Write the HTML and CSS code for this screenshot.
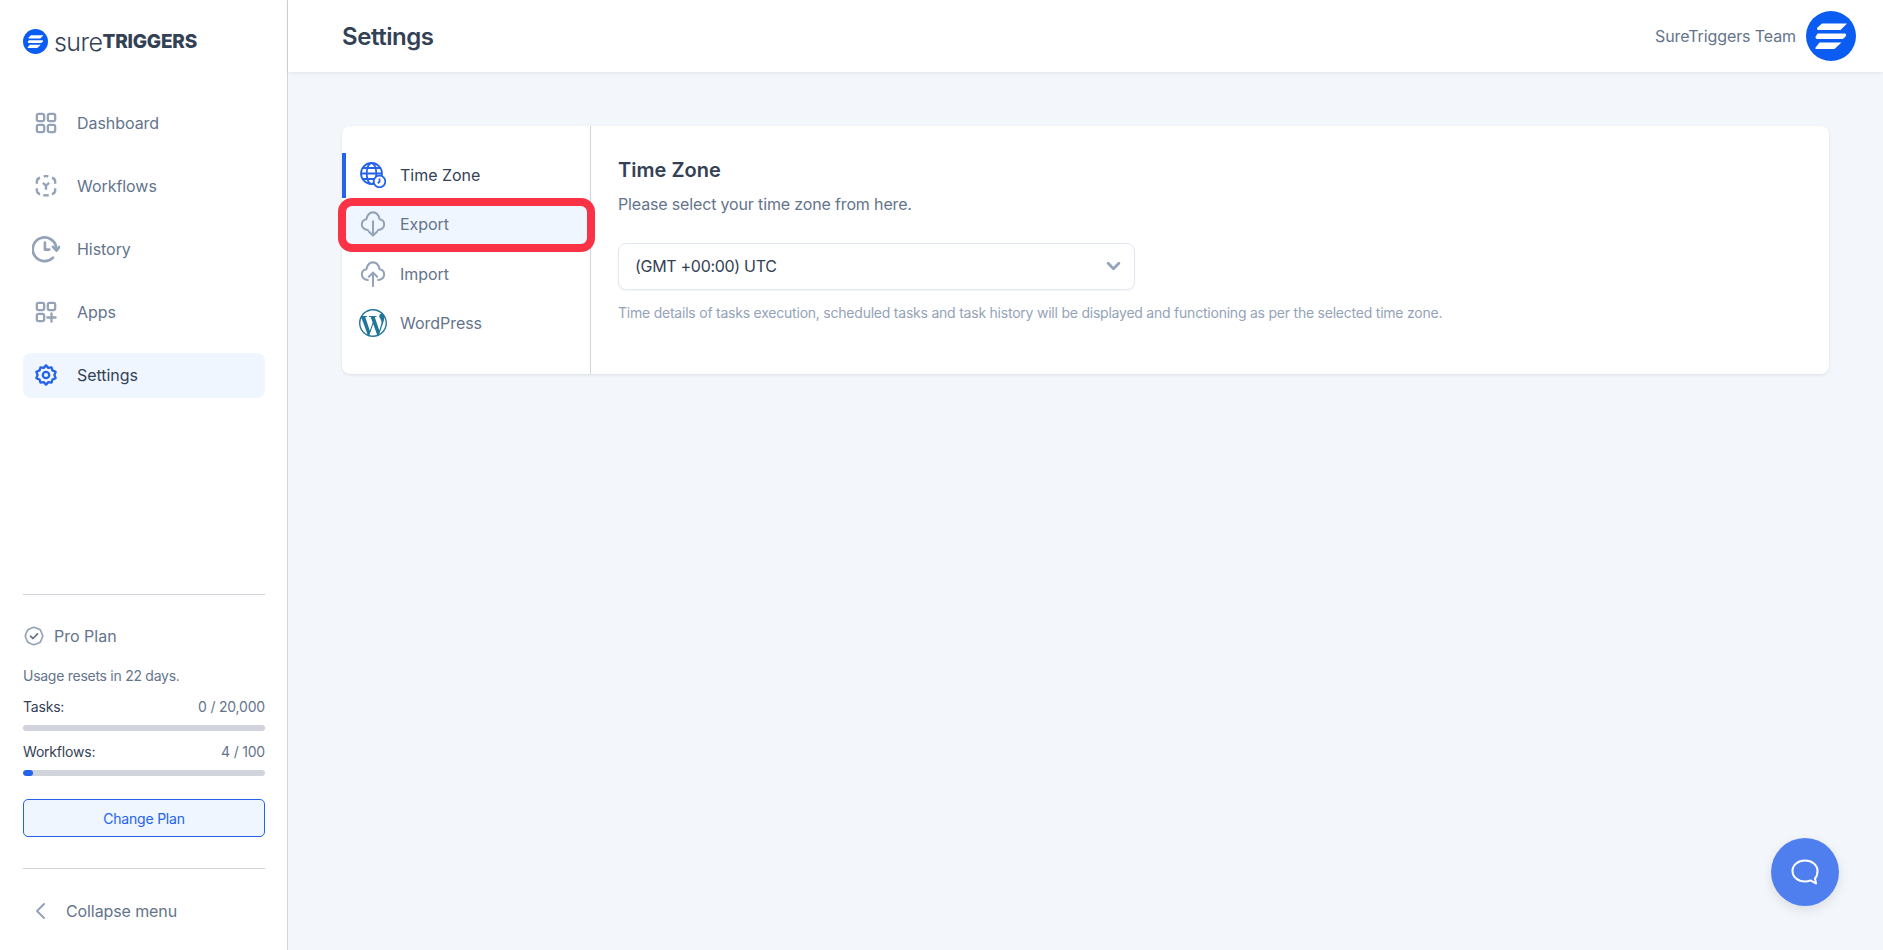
FILE: index.html
```html
<!DOCTYPE html>
<html>

<head>
    <title>Settings</title>
    <meta name="viewport" content="width=device-width, initial-scale=1.0">
    <link rel="stylesheet" href="styles.css">
</head>

<body>
    <svg class="sprite" width="0" height="0">
        <symbol id="brand" viewBox="-25 -25 50 50">
            <circle cx="0" cy="0" r="25" fill="#0b5cf2" />
            <path fill="#fff" d="M-9 -12.500H16L9.500 -6H-12.500C-14 -6 -14.500 -7.500 -13.500 -8.500Z" />
            <path fill="#fff" d="M-13 -2.500H13.500C15.500 -2.500 15.500 -.5 14.500 .5L13 2C12.500 2.500 12 3 11 3H-13.500C-15.500 3 -16 1 -15 0L-14 -1.500C-13.800 -2 -13.500 -2.500 -13 -2.500Z" />
            <path fill="#fff" d="M-11.500 6.500H10.500L3.500 13H-14.500C-16 13 -16 12 -15 11Z" />
        </symbol>
    </svg>

    <div class="app">
        <aside class="sidebar">
            <div class="logo">
                <svg class="logo-mark"><use href="#brand" /></svg>
                <span class="logo-sure">sure</span><span class="logo-triggers">TRIGGERS</span>
            </div>

            <nav class="nav">
                <a class="nav-item">
                    <svg class="nav-icon" viewBox="0 0 24 24" fill="none" stroke="#94a3b8" stroke-width="2.500">
                        <rect x="2" y="2" width="8" height="8" rx="2" />
                        <rect x="14" y="2" width="8" height="8" rx="2" />
                        <rect x="2" y="14" width="8" height="8" rx="2" />
                        <rect x="14" y="14" width="8" height="8" rx="2" />
                    </svg>
                    Dashboard
                </a>
                <a class="nav-item">
                    <svg class="nav-icon" viewBox="0 0 24 24" fill="none" stroke="#94a3b8" stroke-width="2.600" stroke-linejoin="round">
                        <path d="M2 9.500V7C2 5 3 3.800 5.500 3" />
                        <path d="M22 9.500V7C22 5 21 3.800 18.500 3" />
                        <path d="M2 14.500V17C2 19 3 20.200 5.500 21" />
                        <path d="M22 14.500V17C22 19 21 20.200 18.500 21" />
                        <path d="M9.500 1.800L12 .8L14.500 1.800" />
                        <path d="M9 22.200H15" />
                        <path d="M8.500 8.500L12 11.500L15.500 8.500M12 11.500V16" />
                    </svg>
                    Workflows
                </a>
                <a class="nav-item">
                    <svg class="nav-icon nav-icon-wide" viewBox="0 0 26 26" fill="none" stroke="#94a3b8" stroke-width="2.500" stroke-linecap="round" stroke-linejoin="round">
                        <path d="M22.500 11.500A11 11 0 1 0 19.500 21" />
                        <path d="M12 7V13.500H16" />
                        <path d="M19.500 11L22.800 14.500L25.500 11" />
                    </svg>
                    History
                </a>
                <a class="nav-item">
                    <svg class="nav-icon" viewBox="0 0 24 24" fill="none" stroke="#94a3b8" stroke-width="2.500" stroke-linecap="round">
                        <rect x="2" y="2" width="8" height="8" rx="2" />
                        <rect x="14" y="2" width="8" height="8" rx="2" />
                        <rect x="2" y="14" width="8" height="8" rx="2" />
                        <path d="M18 13.500V22.500M13.500 18H22.500" />
                    </svg>
                    Apps
                </a>
                <a class="nav-item nav-item-active">
                    <svg class="nav-icon" viewBox="0 0 24 24" fill="none" stroke="#2563eb" stroke-width="2.500" stroke-linejoin="round">
                        <path d="M12 1.500L14.500 4.200L18 3.600L19 7L22.500 8.500L21.200 12L22.500 15.500L19 17L18 20.400L14.500 19.800L12 22.500L9.500 19.800L6 20.400L5 17L1.500 15.500L2.800 12L1.500 8.500L5 7L6 3.600L9.500 4.200Z" />
                        <circle cx="12" cy="12" r="3.500" />
                    </svg>
                    Settings
                </a>
            </nav>

            <div class="plan">
                <div class="plan-name">
                    <svg class="plan-icon" viewBox="0 0 20 20" fill="none" stroke="#94a3b8" stroke-width="1.700" stroke-linecap="round" stroke-linejoin="round">
                        <path d="M10 1.200L13 2.300L16.200 3.800L17.700 7L18.800 10L17.700 13L16.200 16.200L13 17.700L10 18.800L7 17.700L3.800 16.200L2.300 13L1.200 10L2.300 7L3.800 3.800L7 2.300Z" />
                        <path d="M6.500 10.200L9 12.500L13.500 7.800" stroke="#64748b" />
                    </svg>
                    Pro Plan
                </div>
                <p class="plan-reset">Usage resets in 22 days.</p>
                <div class="usage">
                    <div class="usage-row"><span class="usage-label">Tasks:</span><span>0 / 20,000</span></div>
                    <div class="usage-bar"></div>
                </div>
                <div class="usage">
                    <div class="usage-row"><span class="usage-label">Workflows:</span><span>4 / 100</span></div>
                    <div class="usage-bar"><div class="usage-fill" style="width: 4%"></div></div>
                </div>
                <button class="change-plan">Change Plan</button>
            </div>

            <div class="collapse">
                <svg class="collapse-icon" viewBox="0 0 12 18" fill="none" stroke="#94a3b8" stroke-width="2" stroke-linecap="round" stroke-linejoin="round">
                    <path d="M10 2L3 9L10 16" />
                </svg>
                Collapse menu
            </div>
        </aside>

        <div class="main">
            <header class="topbar">
                <h1>Settings</h1>
                <div class="user">
                    <span>SureTriggers Team</span>
                    <svg class="avatar"><use href="#brand" /></svg>
                </div>
            </header>

            <section class="card">
                <div class="tabs">
                    <a class="tab tab-active">
                        <svg class="tab-icon" viewBox="0 0 26 26" fill="none" stroke="#2563eb" stroke-width="1.800">
                            <circle cx="11.500" cy="11.500" r="10.500" />
                            <ellipse cx="11.500" cy="11.500" rx="4.800" ry="10.500" />
                            <path d="M1 11.500H22M2.500 6H20.500M2.500 17H20.500" />
                            <circle cx="19.500" cy="19.500" r="5.800" fill="#fff" />
                            <path d="M19.500 16.500V19.800L17.800 21.200" />
                        </svg>
                        Time Zone
                    </a>
                    <a class="tab tab-marked">
                        <svg class="tab-icon" viewBox="0 0 26 28" fill="none" stroke="#94a3b8" stroke-width="2.200" stroke-linecap="round" stroke-linejoin="round">
                            <path d="M7.500 20.500C3.500 20.500 1 17.500 1 14.500C1 11.500 3 9.200 6 8.800C6.800 4.500 9.500 1.500 13 1.500C16.500 1.500 19.200 4.500 20 8.800C23 9.200 25 11.500 25 14.500C25 17.500 22.500 20.500 18.500 20.500" />
                            <path d="M13 11V26.500M8.500 22L13 26.500L17.500 22" />
                        </svg>
                        Export
                        <span class="marker"></span>
                    </a>
                    <a class="tab">
                        <svg class="tab-icon" viewBox="0 0 26 28" fill="none" stroke="#94a3b8" stroke-width="2.200" stroke-linecap="round" stroke-linejoin="round">
                            <path d="M7.500 20.500C3.500 20.500 1 17.500 1 14.500C1 11.500 3 9.200 6 8.800C6.800 4.500 9.500 1.500 13 1.500C16.500 1.500 19.200 4.500 20 8.800C23 9.200 25 11.500 25 14.500C25 17.500 22.500 20.500 18.500 20.500" />
                            <path d="M13 27V12.500M8.500 17L13 12.500L17.500 17" />
                        </svg>
                        Import
                    </a>
                    <a class="tab">
                        <svg class="tab-icon tab-icon-wp" viewBox="0 0 24 24">
                            <circle cx="12" cy="12" r="12" fill="#fff" />
                            <path fill="#21759b" d="M21.469 6.825c.84 1.537 1.318 3.3 1.318 5.175 0 3.979-2.156 7.456-5.363 9.325l3.295-9.527c.615-1.54.82-2.771.82-3.864 0-.405-.026-.78-.07-1.11m-7.981.105c.647-.03 1.232-.105 1.232-.105.582-.075.514-.93-.067-.899 0 0-1.755.135-2.88.135-1.064 0-2.85-.15-2.85-.15-.585-.03-.661.855-.075.885 0 0 .54.061 1.125.09l1.68 4.605-2.37 7.08L5.354 6.9c.649-.03 1.234-.1 1.234-.1.585-.075.516-.93-.065-.896 0 0-1.746.138-2.874.138-.2 0-.438-.008-.69-.015C4.911 3.15 8.235 1.215 12 1.215c2.809 0 5.365 1.072 7.286 2.833-.046-.003-.091-.009-.141-.009-1.06 0-1.812.923-1.812 1.914 0 .89.513 1.643 1.06 2.531.411.72.89 1.643.89 2.977 0 .915-.354 1.994-.821 3.479l-1.075 3.585-3.9-11.61.001.014zM12 22.784c-1.059 0-2.081-.153-3.048-.437l3.237-9.406 3.315 9.087c.024.053.05.101.078.149-1.12.393-2.325.609-3.582.609M1.211 12c0-1.564.336-3.05.935-4.39L7.29 21.709C3.694 19.96 1.212 16.271 1.211 12M12 0C5.385 0 0 5.385 0 12s5.385 12 12 12 12-5.385 12-12S18.615 0 12 0" />
                        </svg>
                        WordPress
                    </a>
                </div>

                <div class="panel">
                    <h2>Time Zone</h2>
                    <p class="panel-sub">Please select your time zone from here.</p>
                    <div class="select">
                        <span>(GMT +00:00) UTC</span>
                        <svg class="select-arrow" viewBox="0 0 14 9" fill="none" stroke="#94a3b8" stroke-width="2.600" stroke-linecap="round" stroke-linejoin="round">
                            <path d="M2 2L7 7L12 2" />
                        </svg>
                    </div>
                    <p class="panel-note">Time details of tasks execution, scheduled tasks and task history will be displayed and functioning as per the selected time zone.</p>
                </div>
            </section>
        </div>
    </div>

    <button class="chat">
        <svg class="chat-icon" viewBox="0 0 28 26" fill="none" stroke="#fff" stroke-width="2" stroke-linejoin="round">
            <path d="M14 1.500C7 1.500 1.500 6 1.500 12C1.500 18 7 22.500 14 22.500C16 22.500 18 22.100 19.500 21.400L25 24.500L24 19.500C25.800 17.500 26.500 15 26.500 12C26.500 6 21 1.500 14 1.500Z" />
        </svg>
    </button>
</body>

</html>
```

FILE: styles.css
```css
* {
    box-sizing: border-box;
}

body {
    font-family: 'Inter', sans-serif;
    background-color: #f3f6fb;
    color: #334155;
    margin: 0;
    height: 100vh;
    overflow: hidden;
}

.sprite {
    position: absolute;
}

.app {
    display: flex;
    height: 100%;
}

/* sidebar */

.sidebar {
    width: 288px;
    flex-shrink: 0;
    display: flex;
    flex-direction: column;
    padding: 0 22px 0 23px;
    background-color: #fff;
    border-right: 1px solid #d1d5db;
}

.logo {
    display: flex;
    align-items: center;
    height: 83px;
    color: #334155;
}

.logo-mark {
    width: 25px;
    height: 25px;
    margin-right: 6px;
}

.logo-sure {
    font-size: 25px;
    font-weight: 300;
    letter-spacing: -0.55px;
}

.logo-triggers {
    font-size: 19px;
    font-weight: 800;
    letter-spacing: -0.2px;
}

.nav {
    display: flex;
    flex-direction: column;
    gap: 18px;
    margin-top: 18px;
}

.nav-item {
    display: flex;
    align-items: center;
    height: 45px;
    padding: 0 0 2px 12px;
    border-radius: 8px;
    font-size: 16px;
    letter-spacing: -0.05px;
    color: #64748b;
}

.nav-item-active {
    background-color: #eff6ff;
    color: #334155;
}

.nav-icon {
    width: 22px;
    height: 22px;
    margin-right: 20px;
    flex-shrink: 0;
}

.nav-icon-wide {
    width: 28px;
    height: 28px;
    margin-left: -3px;
    margin-right: 17px;
}

.plan {
    margin-top: auto;
    padding-top: 27px;
    border-top: 1px solid #d1d5db;
}

.plan-name {
    display: flex;
    align-items: center;
    font-size: 16px;
    color: #64748b;
    height: 28px;
}

.plan-icon {
    width: 20px;
    height: 20px;
    margin-left: 1px;
    margin-right: 10px;
}

.plan-reset {
    margin: 16px 0 0;
    font-size: 14px;
    line-height: 20px;
    letter-spacing: -0.27px;
    color: #64748b;
}

.usage {
    margin-top: 11px;
}

.usage-row {
    display: flex;
    justify-content: space-between;
    font-size: 14px;
    line-height: 20px;
    letter-spacing: -0.2px;
    color: #64748b;
}

.usage-label {
    color: #334155;
}

.usage-bar {
    height: 6px;
    margin-top: 8px;
    border-radius: 3px;
    background-color: #d1d5db;
    overflow: hidden;
}

.usage-fill {
    height: 100%;
    border-radius: 3px;
    background-color: #2563eb;
}

.change-plan {
    display: block;
    width: 100%;
    height: 38px;
    margin-top: 23px;
    border: 1px solid #2563eb;
    border-radius: 5px;
    background-color: #eff6ff;
    color: #2563eb;
    font-family: 'Inter', sans-serif;
    font-size: 14px;
    font-weight: 400;
    letter-spacing: -0.2px;
}

.collapse {
    display: flex;
    align-items: center;
    height: 82px;
    margin-top: 31px;
    padding: 2px 0 0 11px;
    border-top: 1px solid #d1d5db;
    font-size: 16px;
    letter-spacing: -0.1px;
    color: #64748b;
}

.collapse-icon {
    width: 12px;
    height: 18px;
    margin-right: 20px;
}

/* main */

.main {
    flex: 1;
    min-width: 0;
}

.topbar {
    display: flex;
    align-items: center;
    justify-content: space-between;
    height: 72px;
    padding: 0 27px 0 54px;
    background-color: #fff;
    box-shadow: 0 1px 4px rgba(0, 0, 0, 0.08);
}

.topbar h1 {
    margin: 0;
    font-size: 24px;
    font-weight: 600;
    letter-spacing: -0.45px;
    color: #334155;
}

.user {
    display: flex;
    align-items: center;
    gap: 10px;
    font-size: 16px;
    letter-spacing: -0.1px;
    color: #64748b;
}

.avatar {
    width: 50px;
    height: 50px;
}

.card {
    display: flex;
    height: 248px;
    margin: 54px 54px 0 54px;
    border-radius: 8px;
    background-color: #fff;
    box-shadow: 0 1px 3px rgba(0, 0, 0, 0.1);
}

.tabs {
    width: 249px;
    flex-shrink: 0;
    display: flex;
    flex-direction: column;
    gap: 4.5px;
    padding-top: 27px;
    border-right: 1px solid #d1d5db;
}

.tab {
    position: relative;
    display: flex;
    align-items: center;
    height: 45px;
    padding: 0 0 2px 18px;
    font-size: 16px;
    letter-spacing: -0.03px;
    color: #64748b;
}

.tab-active {
    border-left: 4px solid #2563eb;
    padding-left: 14px;
    color: #334155;
}

.tab-marked {
    background-color: #eff6ff;
}

.tab-icon {
    width: 26px;
    height: 26px;
    margin-right: 14px;
    flex-shrink: 0;
}

.tab-icon-wp {
    width: 28px;
    height: 28px;
    margin-left: -1px;
    margin-right: 13px;
}

/* red annotation round the export tab */
.marker {
    position: absolute;
    left: -4px;
    right: -5px;
    top: -5px;
    bottom: -4px;
    border: 8px solid #f93345;
    border-radius: 14px;
}

.panel {
    flex: 1;
    padding: 30px 27px;
}

.panel h2 {
    margin: 0;
    font-size: 20px;
    line-height: 28px;
    font-weight: 600;
    letter-spacing: 0.03px;
    color: #334155;
}

.panel-sub {
    margin: 8px 0 0;
    font-size: 16px;
    line-height: 24px;
    letter-spacing: -0.15px;
    color: #64748b;
}

.select {
    display: flex;
    align-items: center;
    justify-content: space-between;
    width: 517px;
    height: 47px;
    margin-top: 27px;
    padding: 0 13px 1px 16px;
    border: 1px solid #e2e8f0;
    border-radius: 8px;
    font-size: 16px;
    letter-spacing: -0.3px;
    color: #334155;
    box-shadow: 0 1px 2px rgba(0, 0, 0, 0.05);
}

.select-arrow {
    width: 15px;
    height: 10px;
}

.panel-note {
    margin: 13px 0 0;
    font-size: 14px;
    line-height: 20px;
    letter-spacing: -0.225px;
    color: #94a3b8;
}

.chat {
    position: fixed;
    left: 1771px;
    top: 838px;
    width: 68px;
    height: 68px;
    border: none;
    border-radius: 50%;
    background-color: #4f7fee;
    box-shadow: 0 4px 12px rgba(0, 0, 0, 0.1);
    display: flex;
    align-items: center;
    justify-content: center;
}

.chat-icon {
    width: 28px;
    height: 26px;
}
```
